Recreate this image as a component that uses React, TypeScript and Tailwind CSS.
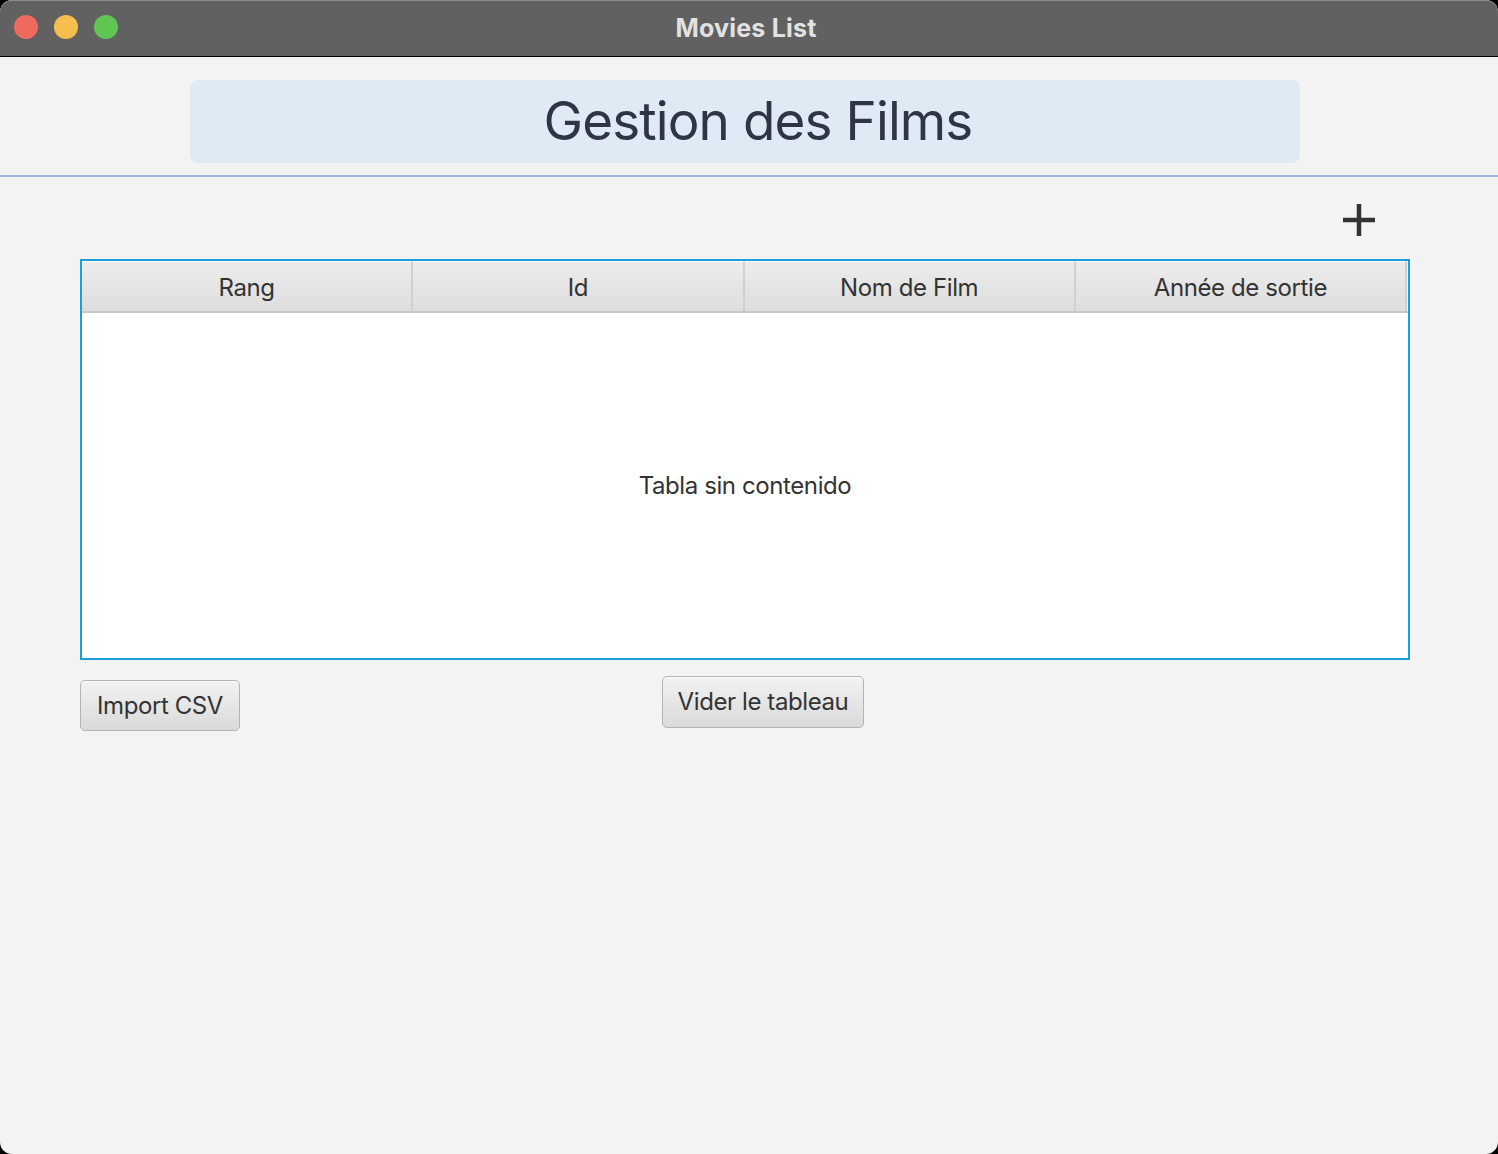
const font = { fontFamily: 'Inter, "Noto Sans", sans-serif' };

const columns = ['Rang', 'Id', 'Nom de Film', 'Année de sortie'];

function Button({ label, className }: { label: string; className?: string }) {
  return (
    <button
      className={`h-[51px] rounded-[5px] border border-[#b3b3b3] bg-gradient-to-b from-[#f2f2f2] to-[#dadada] text-[24px] text-[#333] tracking-[-0.4px] shadow-[inset_0_1px_0_#fafafa] ${className ?? ''}`}
    >
      {label}
    </button>
  );
}

export default function App() {
  return (
    <div className="w-[1498px] h-[1154px] bg-black" style={font}>
      <div className="w-full h-full rounded-[12px] overflow-hidden bg-[#f3f3f3] flex flex-col">
        {/* Title bar */}
        <div className="relative h-[57px] shrink-0 bg-[#616161] border-b border-black border-t border-t-[#8a8a8a] rounded-t-[12px] flex items-center justify-center">
          <div className="absolute left-[14px] top-[14px] flex gap-[16px]">
            <span className="w-[24px] h-[24px] rounded-full bg-[#ee6a5f]" />
            <span className="w-[24px] h-[24px] rounded-full bg-[#f5be4f]" />
            <span className="w-[24px] h-[24px] rounded-full bg-[#61c554]" />
          </div>
          <span className="text-[25px] font-bold text-[#e2e2e2] tracking-[0.2px] pr-[6px]">Movies List</span>
        </div>

        {/* Header */}
        <div className="pt-[23px] border-b-2 border-[#9bb7da]">
          <div className="ml-[190px] mr-[198px] h-[83px] mb-[12px] rounded-[8px] bg-[#e0eaf4] flex items-center justify-center pl-[26px]">
            <h1 className="text-[53px] text-[#2d3642] tracking-[-0.9px] leading-none">Gestion des Films</h1>
          </div>
        </div>

        {/* Add button row */}
        <div className="h-[82px] flex items-start justify-end pr-[122px] pt-[26px]">
          <svg width="34" height="34" viewBox="0 0 34 34">
            <path d="M17 1v32M1 17h32" stroke="#333" strokeWidth="4.5" />
          </svg>
        </div>

        {/* Table */}
        <div className="ml-[80px] mr-[88px] h-[401px] border-2 border-[#1a9fd9] bg-white flex flex-col">
          <div className="flex h-[52px] pr-[1px] border-b-2 border-[#c9c9c9] bg-[#f3f3f3]">
            {columns.map((c) => (
              <div
                key={c}
                className="flex-1 flex items-center justify-center pt-[3px] bg-gradient-to-b from-[#ececec] to-[#dedede] text-[24px] text-[#333] tracking-[-0.4px] border-t border-white border-r-2 border-r-[#d0d0d0]"
              >
                {c}
              </div>
            ))}
          </div>
          <div className="flex-1 flex items-center justify-center text-[24px] text-[#333] tracking-[-0.4px]">
            Tabla sin contenido
          </div>
        </div>

        {/* Bottom buttons */}
        <div className="flex items-start mx-[80px]">
          <Button label="Import CSV" className="mt-[20px] w-[160px]" />
          <Button label="Vider le tableau" className="mt-[16px] ml-[422px] w-[202px] h-[52px]" />
        </div>
      </div>
    </div>
  );
}
